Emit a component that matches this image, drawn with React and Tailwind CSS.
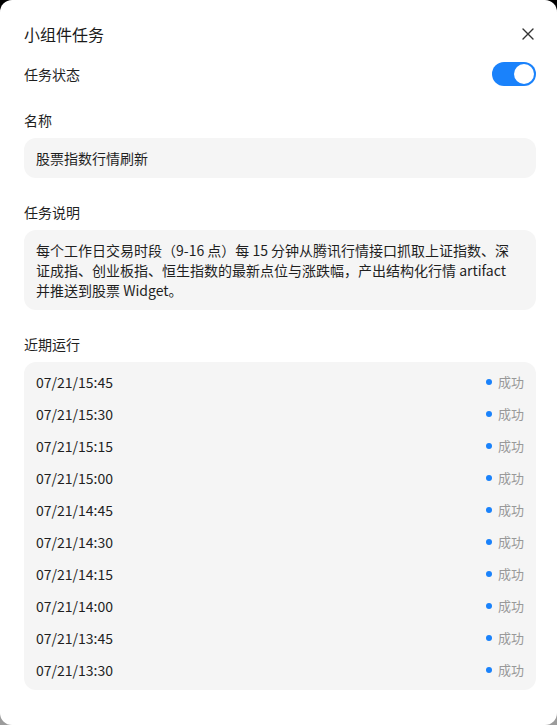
import React, { useState } from 'react';

const runs = [
  '07/21/15:45',
  '07/21/15:30',
  '07/21/15:15',
  '07/21/15:00',
  '07/21/14:45',
  '07/21/14:30',
  '07/21/14:15',
  '07/21/14:00',
  '07/21/13:45',
  '07/21/13:30',
];

const Toggle = ({ on, onChange }) => (
  <button
    type="button"
    onClick={() => onChange(!on)}
    className={`flex h-6 w-11 items-center rounded-full p-0.5 transition-colors ${
      on ? 'justify-end bg-[#1a82fb]' : 'justify-start bg-[#d9d9d9]'
    }`}
  >
    <span className="h-5 w-5 rounded-full bg-white" />
  </button>
);

const Label = ({ children, className = '' }) => (
  <div className={`text-[14px] leading-5 text-[#1f1f1f] ${className}`}>{children}</div>
);

export default function App() {
  const [enabled, setEnabled] = useState(true);

  return (
    <div className="h-[725px] w-[557px] bg-linear-to-b from-black to-[#9c9c9c]">
      <div
        className="flex h-full flex-col rounded-[12px] bg-white pt-[22px] pr-[21px] pl-6"
        style={{ fontFamily: '"Noto Sans CJK SC", "Noto Sans", sans-serif' }}
      >
        {/* Header */}
        <div className="flex items-center justify-between">
          <h1 className="text-[16px] leading-6 font-normal text-[#1a1a1a]">小组件任务</h1>
          <button type="button" className="-mr-1 flex h-6 w-6 items-center justify-center text-[#333]">
            <svg width="12" height="12" viewBox="0 0 12 12" fill="none">
              <path d="M1 1L11 11M11 1L1 11" stroke="currentColor" strokeWidth="1.4" strokeLinecap="round" />
            </svg>
          </button>
        </div>

        {/* Status */}
        <div className="mt-4 flex items-center justify-between">
          <Label>任务状态</Label>
          <Toggle on={enabled} onChange={setEnabled} />
        </div>

        {/* Name */}
        <Label className="mt-6">名称</Label>
        <div className="mt-2 flex h-10 items-center rounded-[12px] bg-[#f5f5f5] px-3 text-[14px] text-[#1f1f1f]">
          股票指数行情刷新
        </div>

        {/* Description */}
        <Label className="mt-6">任务说明</Label>
        <div className="mt-2 rounded-[12px] bg-[#f5f5f5] px-3 py-[10px] text-[14px] leading-5 text-[#1f1f1f]">
          每个工作日交易时段（9-16 点）每 15 分钟从腾讯行情接口抓取上证指数、深
          <br />
          证成指、创业板指、恒生指数的最新点位与涨跌幅，产出结构化行情 artifact
          <br />
          并推送到股票 Widget。
        </div>

        {/* Recent runs */}
        <Label className="mt-6">近期运行</Label>
        <div className="mt-2 rounded-[12px] bg-[#f5f5f5] px-3 py-1">
          {runs.map((t) => (
            <div key={t} className="flex h-8 items-center justify-between">
              <span className="text-[14px] text-[#1f1f1f]">{t}</span>
              <span className="flex items-center gap-[6px] text-[13px] text-[#999]">
                <span className="h-[6px] w-[6px] rounded-full bg-[#1a82fb]" />
                成功
              </span>
            </div>
          ))}
        </div>
      </div>
    </div>
  );
}
